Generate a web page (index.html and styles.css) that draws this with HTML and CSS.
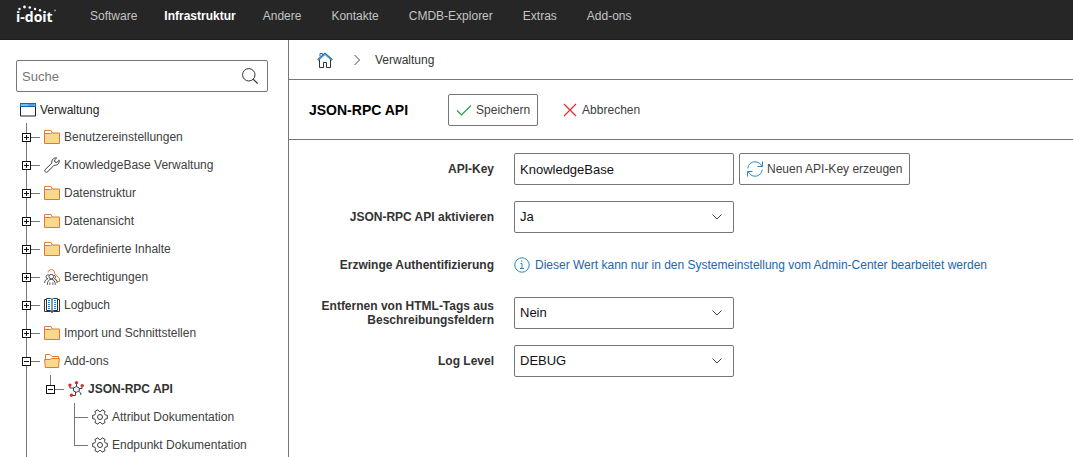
FILE: index.html
```html
<!DOCTYPE html>
<html lang="de">
<head>
<meta charset="utf-8">
<meta name="viewport" content="width=device-width, initial-scale=1">
<title>i-doit – JSON-RPC API</title>
<link rel="stylesheet" href="styles.css">
</head>
<body>
<svg class="sprite" aria-hidden="true">
  <symbol id="folder" viewBox="0 0 16 16">
    <path d="M.5 14.500v-13h6.500l1.500 2.500h7v10.500z" fill="#f7da8e" stroke="#e8762b"/>
    <path d="M1 2h5.700l1 1.700-1.200.8H1z" fill="#fff"/>
    <path d="M1 4.500h5.700l1.500-.8" fill="none" stroke="#e8762b"/>
  </symbol>
  <symbol id="folder-open" viewBox="0 0 16 16">
    <path d="M1.500 7V1.500H6L8 3.500h6.500V6" fill="#fff" stroke="#e8762b"/>
    <path d="M.6 6.500h5.600l1.200-1h8l-1 9h-13z" fill="#f7da8e" stroke="#e8762b"/>
  </symbol>
  <symbol id="gear" viewBox="0 0 16 16">
    <path d="M15.300 6.300V9.700L13.200 10.100 12.400 11.400 13.100 13.500 10.200 15.200 8.800 13.500H7.200L5.800 15.200 2.900 13.500 3.600 11.400 2.800 10.100.7 9.700V6.300L2.800 5.900 3.600 4.600 2.900 2.500 5.800.8 7.200 2.500H8.800L10.200.8 13.100 2.500 12.400 4.600 13.200 5.900z" fill="none" stroke="#3a3a3a" stroke-linejoin="round"/>
    <circle cx="8" cy="8" r="2.500" fill="none" stroke="#3a3a3a"/>
  </symbol>
  <symbol id="chevron" viewBox="0 0 16 16">
    <path d="M3.500 5.500 8 10l4.500-4.500" fill="none" stroke="#444"/>
  </symbol>
</svg>

<header class="topbar">
  <a class="logo" href="#" aria-label="i-doit">
    <svg class="logo-dots" viewBox="0 0 42 18" aria-hidden="true">
      <g fill="#fff">
        <circle cx="3.500" cy="5" r="1.200"/><circle cx="8.500" cy="3" r="1.400"/><circle cx="13.800" cy="3.500" r="1.300"/>
        <circle cx="19" cy="5" r="1.200"/><circle cx="24" cy="6.300" r="1.200"/><circle cx="28.800" cy="8.200" r="1"/>
      </g>
      <circle cx="39" cy="6.500" r="1" fill="#999"/>
    </svg>
    <span class="logo-text">i-doit</span>
  </a>
  <nav class="nav">
    <a href="#">Software</a>
    <a href="#" class="active">Infrastruktur</a>
    <a href="#">Andere</a>
    <a href="#">Kontakte</a>
    <a href="#">CMDB-Explorer</a>
    <a href="#">Extras</a>
    <a href="#">Add-ons</a>
  </nav>
</header>

<div class="shell">
  <aside class="sidebar">
    <div class="search">
      <input type="text" placeholder="Suche" aria-label="Suche">
      <button type="button" aria-label="Suchen">
        <svg class="icon" viewBox="0 0 16 16"><circle cx="6.800" cy="6.800" r="6.200" fill="none" stroke="#333"/><path d="m11.200 11.200 4.500 4.300" stroke="#333" stroke-width="1.200"/></svg>
      </button>
    </div>

    <a class="root" href="#">
      <svg class="icon" viewBox="0 0 16 16"><path d="M.5 1.500h15v12.500H.5z" fill="#fff" stroke="#222"/><path d="M0 1h16v4H0z" fill="#1668b3"/><path d="M1 2h14v2H1z" fill="#7dbbe8"/><path d="M9 2v2m2-2v2m2-2v2" stroke="#1668b3" stroke-width=".7"/></svg>
      <span>Verwaltung</span>
    </a>

    <ul class="tree">
      <li><div class="row"><button class="toggle plus" type="button" aria-label="Öffnen"></button><a href="#"><svg class="icon"><use href="#folder"/></svg>Benutzereinstellungen</a></div></li>
      <li><div class="row"><button class="toggle plus" type="button" aria-label="Öffnen"></button><a href="#"><svg class="icon" viewBox="0 0 16 16"><path d="m1.200 12.500 6.600-6.400C7.300 3 9.500.6 12.700.9L10.500 3l.4 2 2 .4 2.300-2.200c.4 3.200-1.900 5.500-5 5l-6.600 6.600c-.7.700-1.600.7-2.300 0s-.7-1.700-.1-2.300z" fill="#fff" stroke="#3a3a3a"/></svg>KnowledgeBase Verwaltung</a></div></li>
      <li><div class="row"><button class="toggle plus" type="button" aria-label="Öffnen"></button><a href="#"><svg class="icon"><use href="#folder"/></svg>Datenstruktur</a></div></li>
      <li><div class="row"><button class="toggle plus" type="button" aria-label="Öffnen"></button><a href="#"><svg class="icon"><use href="#folder"/></svg>Datenansicht</a></div></li>
      <li><div class="row"><button class="toggle plus" type="button" aria-label="Öffnen"></button><a href="#"><svg class="icon"><use href="#folder"/></svg>Vordefinierte Inhalte</a></div></li>
      <li><div class="row"><button class="toggle plus" type="button" aria-label="Öffnen"></button><a href="#"><svg class="icon" viewBox="0 0 16 16"><path d="M4 3.500C4.200 1.600 5.700.6 7.500.6c2.200 0 3.500 1.900 2.900 3.900l5.100 5.200v2.800h-2.200l-2.300-2.300" fill="none" stroke="#e8762b"/><g fill="#fff" stroke="#3a3a3a" stroke-width=".9"><path d="M5 6.200a1.900 1.900 0 1 0-1 3.500C1.800 10 .8 11.500.6 14M10 6.200a1.900 1.900 0 0 1 .5 3.500c1.600.3 2.500 1.800 2.700 4.300"/><circle cx="7.300" cy="7.600" r="2.300"/><path d="M3.300 15.800c0-3.500 1.500-5.400 4-5.400s4 1.900 4 5.400M5.800 13.500v2.300m3-2.300v2.300"/></g></svg>Berechtigungen</a></div></li>
      <li><div class="row"><button class="toggle plus" type="button" aria-label="Öffnen"></button><a href="#"><svg class="icon" viewBox="0 0 16 16"><path d="M2.500 1.500h4L8 2.500l1.500-1h4v12h-4L8 14.500l-1.500-1h-4z" fill="#fff" stroke="#333"/><path d="M2 2.500H.5v12h6l1.500 1 1.500-1h6v-12H14M8 2.500v12" fill="none" stroke="#333"/><path d="M4 3.500h2M4 5.500h2M4 7.500h2M4 9.500h2M4 11.500h2M10 3.500h2M10 5.500h2M10 7.500h2M10 9.500h2M10 11.500h2" stroke="#2785c9"/></svg>Logbuch</a></div></li>
      <li><div class="row"><button class="toggle plus" type="button" aria-label="Öffnen"></button><a href="#"><svg class="icon"><use href="#folder"/></svg>Import und Schnittstellen</a></div></li>
      <li>
        <div class="row"><button class="toggle" type="button" aria-label="Schließen"></button><a href="#"><svg class="icon"><use href="#folder-open"/></svg>Add-ons</a></div>
        <ul>
          <li>
            <div class="row"><button class="toggle" type="button" aria-label="Schließen"></button><a href="#" class="current"><svg class="icon" viewBox="0 0 16 16"><path d="M1.900 4.500v2.500h4M8.500 2v4M14 5v2.500h-3M3.500 14.500h4V11M10.800 10.500l2 1.500v2" fill="none" stroke="#444"/><path d="M8.400 5.500 11.300 7v3L8.400 11.300 5.500 10V7z" fill="#eee" stroke="#444"/><g fill="#e22a2f"><circle cx="1.900" cy="4.100" r="1.700"/><circle cx="8.500" cy="1.700" r="1.700"/><circle cx="14.200" cy="4.600" r="1.700"/><circle cx="3.500" cy="14.300" r="1.700"/></g></svg>JSON-RPC API</a></div>
            <ul>
              <li><div class="row leaf"><a href="#"><svg class="icon"><use href="#gear"/></svg>Attribut Dokumentation</a></div></li>
              <li><div class="row leaf"><a href="#"><svg class="icon"><use href="#gear"/></svg>Endpunkt Dokumentation</a></div></li>
            </ul>
          </li>
        </ul>
      </li>
      <li><div class="row"></div></li>
    </ul>
  </aside>

  <main class="content">
    <nav class="breadcrumb" aria-label="Brotkrumen">
      <a href="#" aria-label="Start"><svg class="icon" viewBox="0 0 16 16"><path d="M2.500 7v8.500h4v-5h3v5h4V7" fill="#fff" stroke="#333"/><path d="M3 4.500V1.500h2.500v1.300" fill="none" stroke="#1668b3"/><path d="M.8 8 8 1.800 15.200 8" fill="none" stroke="#1668b3" stroke-width="2"/><path d="M1 8.200 8 2.200l7 6" fill="none" stroke="#8cc4ea" stroke-width=".7"/></svg></a>
      <svg class="icon crumb-arrow" viewBox="0 0 16 16"><path d="M5.500 3 10.500 8l-5 5" fill="none" stroke="#444"/></svg>
      <a href="#">Verwaltung</a>
    </nav>

    <div class="toolbar">
      <h1>JSON-RPC API</h1>
      <div class="actions">
        <button class="btn" type="submit" form="settings"><svg class="icon" viewBox="0 0 16 16"><path d="M1 8.500 5.500 13 15 3.500" fill="none" stroke="#1d9f4b" stroke-width="1.200"/></svg>Speichern</button>
        <button class="btn plain" type="button"><svg class="icon" viewBox="0 0 16 16"><path d="m2 2 12 12m0-12L2 14" stroke="#e22a2f" stroke-width="1.200"/></svg>Abbrechen</button>
      </div>
    </div>

    <form class="form" id="settings">
      <label for="key">API-Key</label>
      <div class="field">
        <input class="control" id="key" type="text" value="KnowledgeBase">
        <button class="btn" type="button"><svg class="icon" viewBox="0 0 16 16"><path d="M.8 7.500C1.100 3.700 4.200.8 8 .8c3.100 0 5.800 1.900 6.800 4.700M15.200 8.500c-.3 3.800-3.400 6.700-7.200 6.700-3.100 0-5.800-1.900-6.800-4.700M15.500.5v5h-5M.5 15.500v-5h5" fill="none" stroke="#2785c9"/></svg>Neuen API-Key erzeugen</button>
      </div>

      <label for="active">JSON-RPC API aktivieren</label>
      <div class="select"><select class="control" id="active"><option>Ja</option><option>Nein</option></select><svg class="icon"><use href="#chevron"/></svg></div>

      <span class="label">Erzwinge Authentifizierung</span>
      <p class="info"><svg class="icon" viewBox="0 0 16 16"><circle cx="8" cy="8" r="7.200" fill="none" stroke="#2785c9"/><path d="M6.500 6.500h1.500v5M6 11.500h4M7 4h1.500" fill="none" stroke="#2785c9"/></svg>Dieser Wert kann nur in den Systemeinstellung vom Admin-Center bearbeitet werden</p>

      <label for="strip">Entfernen von HTML-Tags aus Beschreibungsfeldern</label>
      <div class="select"><select class="control" id="strip"><option>Nein</option><option>Ja</option></select><svg class="icon"><use href="#chevron"/></svg></div>

      <label for="level">Log Level</label>
      <div class="select"><select class="control" id="level"><option>DEBUG</option><option>INFO</option></select><svg class="icon"><use href="#chevron"/></svg></div>
    </form>
  </main>
</div>
</body>
</html>
```

FILE: styles.css
```css
* { box-sizing: border-box; }

body {
  margin: 0;
  height: 100vh;
  display: flex;
  flex-direction: column;
  overflow: hidden;
  background: #fff;
  color: #333;
  font: 12px/14px "Liberation Sans", Arial, sans-serif;
}

a { color: inherit; text-decoration: none; }
button, input, select { font: inherit; color: inherit; }
button { cursor: pointer; }
.sprite { display: none; }
.icon { width: 16px; height: 16px; flex: none; display: block; }

/* Top bar */
.topbar {
  flex: none;
  height: 40px;
  display: flex;
  padding: 4px 16px;
  background: #262626;
  border-bottom: 1px solid #1c1c1c;
}
.logo { width: 74px; display: grid; color: #fff; }
.logo > * { grid-area: 1 / 1; }
.logo-dots { width: 42px; height: 18px; }
.logo-text { padding-top: 4px; font: bold 14px/18px "Open Sans", sans-serif; }
.nav { display: flex; gap: 30px; padding-top: 5px; color: #c4c4c4; }
/* Bold text is wider: keep the neighbours where they are for regular weight */
.nav .active { margin: 0 -3px; color: #fff; font-weight: bold; }

.shell { flex: 1; min-height: 0; display: flex; }

/* Sidebar */
.sidebar {
  flex: none;
  width: 289px;
  overflow: hidden;
  padding: 20px 20px 0 16px;
  border-right: 1px solid #75767a;
}
.search {
  display: flex;
  height: 32px;
  border: 1px solid #75767a;
  border-radius: 2px;
}
.search input {
  flex: 1;
  min-width: 0;
  border: 0;
  padding: 1px 5px 0;
  background: none;
  font-size: 13px;
}
.search input::placeholder { color: #757575; }
.search button { border: 0; padding: 0 9px; background: none; }
.root {
  display: flex;
  align-items: center;
  gap: 4px;
  height: 20px;
  margin: 8px 0 3px 4px;
  color: #222;
}

/* Tree: every item draws its piece of the vertical guide line */
.tree, .tree ul { list-style: none; margin: 0; padding: 0; }
.tree { margin-left: 10px; }
.tree ul { margin-left: 24px; }
.tree li { background: linear-gradient(#75767a, #75767a) 0 0 / 1px 100% no-repeat; }
.tree li:last-child { background-size: 1px 14px; }
.row { display: flex; align-items: center; height: 28px; }
.row a { display: flex; align-items: center; gap: 4px; color: #404040; }
.row .current { color: #333; font-weight: bold; }
.row a::before { content: ""; width: 9px; height: 1px; background: #75767a; }
.leaf a::before { width: 14px; }
.toggle {
  flex: none;
  width: 9px;
  height: 9px;
  margin-left: -4px;
  padding: 0;
  border: 1px solid #111;
  background: linear-gradient(#111, #111) center / 5px 1px no-repeat, #fff;
}
.toggle.plus {
  background:
    linear-gradient(#111, #111) center / 5px 1px no-repeat,
    linear-gradient(#111, #111) center / 1px 5px no-repeat,
    #fff;
}

/* Content */
.content { flex: 1; min-width: 0; }
.breadcrumb {
  display: flex;
  align-items: center;
  height: 40px;
  padding: 0 28px;
  border-bottom: 1px solid #75767a;
}
.crumb-arrow { margin: 0 10px 0 16px; }
.toolbar {
  display: flex;
  align-items: center;
  gap: 40px;
  height: 60px;
  padding: 0 20px;
  border-bottom: 1px solid #75767a;
}
h1 { margin: 0; color: #000; font-size: 14px; line-height: 16px; }
.actions { display: flex; gap: 16px; }
.btn {
  display: flex;
  align-items: center;
  gap: 4px;
  height: 32px;
  padding: 0 7px;
  border: 1px solid #75767a;
  border-radius: 2px;
  background: #fff;
  color: #404040;
  white-space: nowrap;
}
.btn.plain { border-color: transparent; background: none; }

.form {
  display: grid;
  grid-template-columns: 185px 1fr;
  grid-auto-rows: 32px;
  align-items: center;
  gap: 16px 20px;
  padding: 13px 20px;
}
.form label, .label { text-align: right; font-weight: bold; }
.field { display: flex; gap: 5px; }
.control {
  width: 220px;
  height: 32px;
  padding: 0 5px;
  border: 1px solid #75767a;
  border-radius: 2px;
  background: #fff;
  color: #111;
  font-size: 13px;
  appearance: none;
}
.select { display: grid; width: 220px; align-items: center; }
.select > * { grid-area: 1 / 1; }
.select .icon { justify-self: end; margin-right: 9px; pointer-events: none; }
.info { display: flex; align-items: center; gap: 5px; margin: 0; color: #1668b3; }
```
